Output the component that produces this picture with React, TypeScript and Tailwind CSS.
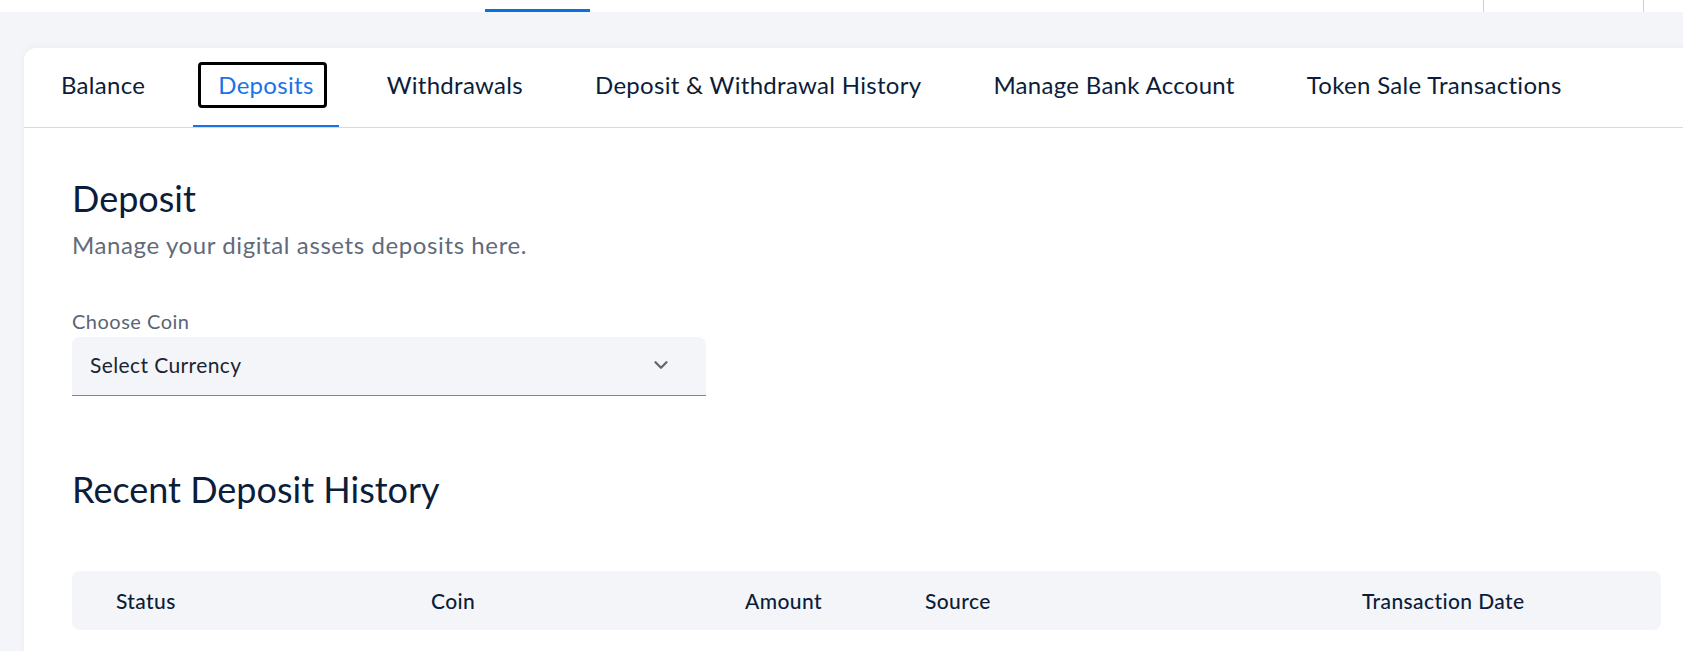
import { ChevronDown } from "lucide-react";

const tabs = [
  "Balance",
  "Deposits",
  "Withdrawals",
  "Deposit & Withdrawal History",
  "Manage Bank Account",
  "Token Sale Transactions",
];

const columns = ["Status", "Coin", "Amount", "Source", "Transaction Date"];

export default function App() {
  function renderTopBar() {
    return (
      <div className="flex h-[12px] bg-white">
        <div className="ml-[485px] mt-auto h-[3px] w-[105px] bg-[#0a6fe0]" />
        <div className="ml-[893px] w-[160px] border-l border-[#cfcfcf]" />
        <div className="border-l border-[#cfcfcf]" />
      </div>
    );
  }

  function renderTabs() {
    return (
      <div className="flex h-[80px] gap-6 border-b border-[#d9d9d9] pl-[13px] text-[24px] tracking-[0.3px]">
        {tabs.map((tab) => {
          if (tab === "Deposits") {
            return (
              <div
                key={tab}
                className="flex h-[79px] items-center border-b-2 border-[#1a73e8] pb-[4px] pl-[5px] pr-[12px]"
              >
                <span className="flex h-[46px] items-center rounded-[4px] border-[3px] border-black pl-[17px] pr-[10px] text-[#1a73e8]">
                  {tab}
                </span>
              </div>
            );
          }
          return (
            <div key={tab} className="flex h-[79px] items-center px-6 pb-[6px]">
              {tab}
            </div>
          );
        })}
      </div>
    );
  }

  function renderDeposit() {
    return (
      <div>
        <h1 className="mt-[50px] text-[36px] leading-[40px] text-[#0b1d3a]">
          Deposit
        </h1>
        <p className="mt-[13px] text-[24px] leading-[28px] tracking-[0.6px] text-[#5f6b7b]">
          Manage your digital assets deposits here.
        </p>
        <label className="mt-[50px] block text-[20px] leading-[24px] tracking-[0.5px] text-[#5a6472]">
          Choose Coin
        </label>
        <div className="mt-[4px] flex h-[59px] w-[634px] items-center justify-between rounded-t-[8px] border-b border-[#7b8a8b] bg-[#f4f5f8] pb-[2px] pl-[18px] pr-[34px]">
          <span className="text-[21px] tracking-[0.4px] text-[#1b2433]">
            Select Currency
          </span>
          <ChevronDown className="h-[22px] w-[22px] text-[#666]" strokeWidth={2.5} />
        </div>
      </div>
    );
  }

  function renderHistory() {
    return (
      <div>
        <h2 className="mt-[73px] text-[36px] leading-[40px] text-[#0b1d3a]">
          Recent Deposit History
        </h2>
        <div className="mt-[62px] grid h-[59px] w-[1589px] grid-cols-[315px_314px_180px_437px_1fr] items-center rounded-[8px] bg-[#f4f5f8] pl-[44px] text-[21px] font-medium tracking-[0.4px] text-[#0b1d3a]">
          {columns.map((col) => (
            <span key={col}>{col}</span>
          ))}
        </div>
      </div>
    );
  }

  return (
    <div
      className="h-[651px] w-[1683px] overflow-hidden bg-[#f4f5f8] text-[#0b1d3a]"
      style={{ fontFamily: "Lato, 'Noto Sans', sans-serif" }}
    >
      {renderTopBar()}
      <div className="ml-[24px] mt-[36px] h-[700px] w-[1685px] rounded-tl-[12px] bg-white shadow-[0_-2px_6px_rgba(0,0,0,0.03)]">
        {renderTabs()}
        <div className="pl-[48px]">
          {renderDeposit()}
          {renderHistory()}
        </div>
      </div>
    </div>
  );
}
